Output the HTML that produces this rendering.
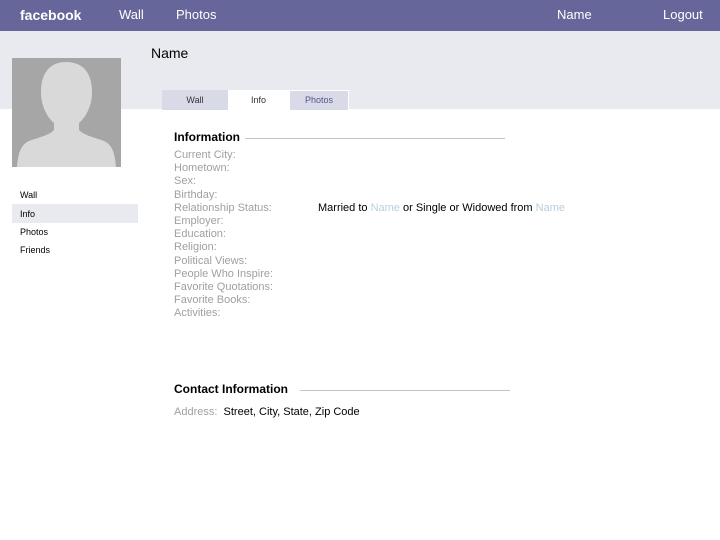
<!DOCTYPE html>
<html><head><style>
*{margin:0;padding:0;box-sizing:border-box}
body{width:720px;height:540px;overflow:hidden;background:#fff;font-family:"Liberation Sans",sans-serif;position:relative}
.a{position:absolute;white-space:nowrap}
.top{position:absolute;left:0;top:0;width:720px;height:31px;background:#66669a}
.band{position:absolute;left:0;top:31px;width:720px;height:78px;background:#e9e9f0}
.w{color:#fff;font-size:13px}
.g{color:#a0a0a0;font-size:11px}
.n{font-size:9px;color:#000}
</style></head><body>
<div class="top"></div>
<div class="band"></div>
<div class="a w" style="left:20px;top:7px;font-weight:bold;font-size:14px">facebook</div>
<div class="a w" style="left:119px;top:7px">Wall</div>
<div class="a w" style="left:176px;top:7px">Photos</div>
<div class="a w" style="left:557px;top:7px">Name</div>
<div class="a w" style="left:663px;top:7px">Logout</div>
<div class="a" style="left:151px;top:45px;font-size:14px;color:#000">Name</div>
<svg class="a" style="left:12px;top:58px" width="109" height="109" viewBox="0 0 109 109">
<rect width="109" height="109" fill="#a6a6a6"/>
<path d="M54 4c-17 0-25 12-25 30 0 14 6 25 13 31v7c-4 5-17 8-25 11C8 87 6 97 5 109h99c-1-12-3-22-12-26-8-3-21-6-25-11v-7c7-6 13-17 13-31 0-18-8-30-26-30z" fill="#d9d9d9"/>
</svg>
<div class="a n" style="left:20px;top:190px">Wall</div>
<div class="a" style="left:12px;top:204px;width:126px;height:19px;background:#e9e9f0"></div>
<div class="a n" style="left:20px;top:209px">Info</div>
<div class="a n" style="left:20px;top:227px">Photos</div>
<div class="a n" style="left:20px;top:245px">Friends</div>
<div class="a" style="left:162px;top:90px;width:66px;height:20px;background:#d9dae8;font-size:9px;text-align:center;line-height:20px;color:#333">Wall</div>
<div class="a" style="left:228px;top:90px;width:61px;height:20px;background:#fff;font-size:9px;text-align:center;line-height:20px;color:#333">Info</div>
<div class="a" style="left:289px;top:90px;width:60px;height:20px;background:#d9dae8;border:1px solid #fff;border-bottom:none;font-size:9px;text-align:center;line-height:19px;color:#55558a">Photos</div>
<div class="a" style="left:174px;top:130px;font-size:12px;font-weight:bold">Information</div>
<div class="a" style="left:245px;top:138px;width:260px;height:1px;background:#c4c4c4"></div>
<div class="a g" style="left:174px;top:149px;line-height:13.2px">Current City:<br>Hometown:<br>Sex:<br>Birthday:<br>Relationship Status:<br>Employer:<br>Education:<br>Religion:<br>Political Views:<br>People Who Inspire:<br>Favorite Quotations:<br>Favorite Books:<br>Activities:</div>
<div class="a" style="left:318px;top:202px;font-size:11px">Married to <span style="color:#b8d0dc">Name</span> or Single or Widowed from <span style="color:#b8d0dc">Name</span></div>
<div class="a" style="left:174px;top:382px;font-size:12px;font-weight:bold">Contact Information</div>
<div class="a" style="left:300px;top:390px;width:210px;height:1px;background:#c4c4c4"></div>
<div class="a" style="left:174px;top:406px;font-size:11px"><span style="color:#a0a0a0">Address:</span>&nbsp; Street, City, State, Zip Code</div>
</body></html>
